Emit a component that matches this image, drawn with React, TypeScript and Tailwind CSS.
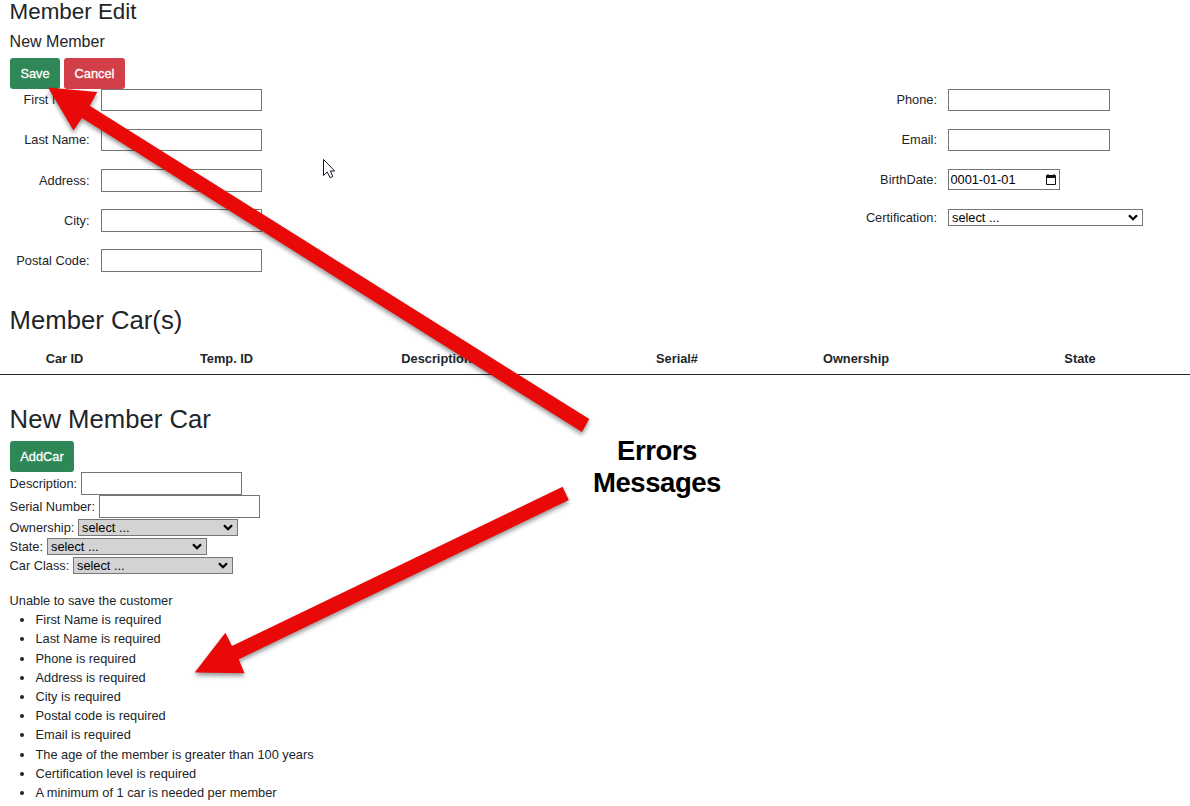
import React from "react";

function TextInput({ className, label }: { className: string; label: string }) {
  return <input type="text" aria-label={label} className={`block border border-[#767676] bg-white px-0.5 outline-none ${className}`} />;
}

function Select({ className }: { className: string }) {
  return (
    <button type="button" className={`flex items-center justify-between border border-[#767676] pl-[3px] pr-1 text-left text-black ${className}`}>
      <span className="leading-[15px]">select ...</span>
      <svg width="10" height="7" viewBox="0 0 10 7" fill="none" stroke="#000" strokeWidth="2.3">
        <path d="M1 1.2 5 5.2 9 1.2" />
      </svg>
    </button>
  );
}

const leftFields = [
  { label: "First Name:", size: "h-[22px]", pad: "h-[21px]" },
  { label: "Last Name:", size: "h-[22px]", pad: "h-[21px]" },
  { label: "Address:", size: "h-[23px]", pad: "h-[23px]" },
  { label: "City:", size: "h-[23px]", pad: "h-[23px]" },
  { label: "Postal Code:", size: "h-[23px]", pad: "h-[23px]" },
];

const columns = [
  { name: "Car ID", width: "w-[129px]" },
  { name: "Temp. ID", width: "w-[195px]" },
  { name: "Description", width: "w-[225px]" },
  { name: "Serial#", width: "w-[256px]" },
  { name: "Ownership", width: "w-[102px]" },
  { name: "State", width: "w-[346px]" },
];

const errors = [
  "First Name is required",
  "Last Name is required",
  "Phone is required",
  "Address is required",
  "City is required",
  "Postal code is required",
  "Email is required",
  "The age of the member is greater than 100 years",
  "Certification level is required",
  "A minimum of 1 car is needed per member",
];

function RightLabel({ children }: { children: React.ReactNode }) {
  return <label className="w-[100px] text-right leading-[21px]">{children}</label>;
}

function Annotations() {
  return (
    <>
      <svg className="pointer-events-none absolute inset-0" width="1190" height="806" viewBox="0 0 1190 806">
        <g fill="#ea0909" className="[filter:drop-shadow(0px_3px_2px_rgba(0,0,0,0.4))]">
          <path d="M48 87.5 97.3 92 89.7 105.7 589.3 419 582 432 82 118 73.5 130.5Z" />
          <path d="M194.7 672.4 225.4 632.7 232 646 562.6 486.8 568.8 500 238.7 659.3 244.5 673.3Z" />
        </g>
        <path d="M323.5 159.5V175.5L327.2 172 330 177.6 332.8 176.5 330.3 171H334.7Z" fill="#fff" stroke="#111827" strokeWidth="1" />
      </svg>
      <div className="absolute left-[577px] top-[435px] w-[160px] text-center text-[27.5px] leading-8 font-bold tracking-[-0.45px] text-black">
        Errors
        <br />
        Messages
      </div>
    </>
  );
}

export default function App() {
  return (
    <div className="relative h-[806px] w-[1190px] overflow-hidden bg-white font-['Liberation_Sans',Arial,sans-serif] text-[12.8px] leading-[19.2px] text-[#212529]">
      <h3 className="h-[25px] pl-[9.6px] text-[22.4px] leading-6">Member Edit</h3>
      <h5 className="h-[33px] pl-[9.6px] pt-[7px] text-[16px] leading-5">New Member</h5>
      <div className="flex gap-1 pl-2.5 font-normal text-white">
        <button className="h-[31px] w-[50px] rounded-[3px] bg-[#2e8757] [-webkit-text-stroke:0.3px_white]">Save</button>
        <button className="h-[31px] w-[61px] rounded-[3px] bg-[#d33f49] [-webkit-text-stroke:0.3px_white]">Cancel</button>
      </div>

      <div className="flex h-[215px]">
        <div className="flex w-[837px] flex-col">
          {leftFields.map((f) => (
            <div key={f.label} className="flex h-10 items-start gap-[11.4px]">
              <label className={`flex w-[89.6px] items-center justify-end ${f.pad}`}>{f.label}</label>
              <TextInput label={f.label} className={`w-[161px] ${f.size}`} />
            </div>
          ))}
        </div>
        <div className="flex flex-col">
          <div className="flex h-10 items-start gap-[11px]">
            <RightLabel>Phone:</RightLabel>
            <TextInput label="Phone" className="h-[22px] w-[162px]" />
          </div>
          <div className="flex h-10 items-start gap-[11px]">
            <RightLabel>Email:</RightLabel>
            <TextInput label="Email" className="h-[22px] w-[162px]" />
          </div>
          <div className="flex h-10 items-start gap-[11px]">
            <RightLabel>BirthDate:</RightLabel>
            <div className="flex h-[21px] w-[112px] items-center justify-between border border-[#767676] pl-[1.5px] pr-[3px] text-black">
              <span className="tracking-[-0.05px]">0001-01-01</span>
              <svg width="10" height="12" viewBox="0 0 10 12">
                <path d="M1.5 0H2.5V1H7.5V0H8.5V1H9Q10 1 10 2V10Q10 11 9 11H1Q0 11 0 10V2Q0 1 1 1H1.5ZM1 4V10H9V4Z" fill="#111" fillRule="evenodd" />
              </svg>
            </div>
          </div>
          <div className="flex items-start gap-[11px]">
            <label className="w-[100px] text-right leading-[17px]">Certification:</label>
            <Select className="h-[17px] w-[195px]" />
          </div>
        </div>
      </div>

      <h2 className="h-[38px] pl-[9.6px] text-[25.7px] leading-[32px]">Member Car(s)</h2>
      <div className="flex h-[33px] w-[1253px] border-b border-[#212529] pt-[7px] text-center font-bold">
        {columns.map((c) => (
          <div key={c.name} className={`shrink-0 ${c.width}`}>{c.name}</div>
        ))}
      </div>

      <h2 className="h-[66px] pl-[9.6px] pt-7 text-[25.7px] leading-[32px]">New Member Car</h2>
      <div className="flex flex-col items-start pl-[9.6px]">
        <button className="ml-[0.4px] h-[31px] w-16 rounded-[3px] bg-[#2e8757] text-white [-webkit-text-stroke:0.3px_white]">AddCar</button>
        <div className="flex h-[23px] items-center">
          <label className="w-[71.4px]">Description:</label>
          <TextInput label="Description" className="h-[23px] w-[161px]" />
        </div>
        <div className="flex h-6 items-start">
          <label className="w-[89.4px] leading-[23px]">Serial Number:</label>
          <TextInput label="Serial number" className="h-[23px] w-[161px]" />
        </div>
        <div className="flex h-[19px] items-start">
          <label className="w-[68.4px] leading-[17px]">Ownership:</label>
          <Select className="h-[17px] w-[160px] bg-[#d3d3d3]" />
        </div>
        <div className="flex h-[19px] items-start">
          <label className="w-[37.4px] leading-[17px]">State:</label>
          <Select className="h-[17px] w-[160px] bg-[#d3d3d3]" />
        </div>
        <div className="flex h-[19px] items-start">
          <label className="w-[63.4px] leading-[17px]">Car Class:</label>
          <Select className="h-[17px] w-[160px] bg-[#d3d3d3]" />
        </div>
        <p className="pt-[15px]">Unable to save the customer</p>
        <ul className="list-disc pl-[25.9px]">
          {errors.map((e) => (
            <li key={e}>{e}</li>
          ))}
        </ul>
      </div>
      <Annotations />
    </div>
  );
}
